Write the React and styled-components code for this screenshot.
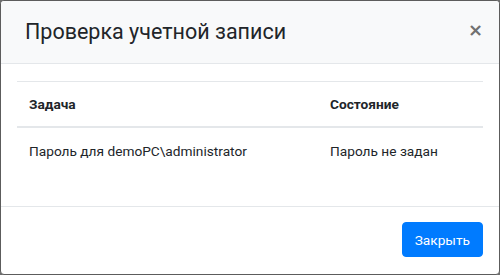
import styled, { createGlobalStyle } from "styled-components";

const Global = createGlobalStyle`
  html, body {
    margin: 0;
    padding: 0;
    background: #6f6f6f;
  }
  body {
    font-family: Roboto, "Noto Sans", sans-serif;
    color: #212529;
  }
`;

export default function App() {
  return (
    <>
      <Global />
      <Dialog>
        <Header>
          <Title>Проверка учетной записи</Title>
          <CloseButton aria-label="Close">×</CloseButton>
        </Header>
        <Body>
          <Table>
            <thead>
              <tr>
                <Th>Задача</Th>
                <Th>Состояние</Th>
              </tr>
            </thead>
            <tbody>
              <tr>
                <Td>Пароль для demoPC\administrator</Td>
                <Td>Пароль не задан</Td>
              </tr>
            </tbody>
          </Table>
        </Body>
        <Footer>
          <PrimaryButton>Закрыть</PrimaryButton>
        </Footer>
      </Dialog>
    </>
  );
}

const Dialog = styled.div`
  box-sizing: border-box;
  width: 500px;
  height: 275px;
  background: #fff;
  border: 1px solid #5c5c5c;
  border-radius: 4px;
  overflow: hidden;
  display: flex;
  flex-direction: column;
`;

const Header = styled.div`
  height: 63px;
  box-sizing: border-box;
  background: #f8f9fa;
  border-bottom: 1px solid #e4e7ea;
  display: flex;
  align-items: center;
  justify-content: space-between;
  padding: 0 16px 0 24px;
`;

const Title = styled.h5`
  margin: 0;
  font-size: 21.5px;
  font-weight: 400;
  line-height: 1.5;
`;

const CloseButton = styled.button`
  border: 0;
  background: transparent;
  padding: 0;
  margin-top: -4px;
  font-family: "DejaVu Sans", sans-serif;
  font-size: 18px;
  font-weight: 700;
  line-height: 1;
  color: #707070;
  cursor: pointer;
`;

const Body = styled.div`
  padding: 16px 16px;
  flex: 1;
`;

const Table = styled.table`
  width: 100%;
  border-collapse: collapse;
  font-size: 13.7px;
  margin-top: 1px;
`;

const Th = styled.th`
  text-align: left;
  font-weight: 700;
  padding: 12px 12px 11px;
  line-height: 21px;
  border-top: 1px solid #e4e7ea;
  border-bottom: 2px solid #e4e7ea;
  &:first-child { width: 277px; }
`;

const Td = styled.td`
  padding: 13px 12px 12px;
  line-height: 21px;
  &:first-child { width: 277px; }
`;

const Footer = styled.div`
  height: 68px;
  box-sizing: border-box;
  border-top: 1px solid #e4e7ea;
  display: flex;
  align-items: center;
  justify-content: flex-end;
  padding: 0 16px 2px;
`;

const PrimaryButton = styled.button`
  height: 35px;
  padding: 0 12px;
  border: 1px solid #007bff;
  background: #007bff;
  color: #fff;
  border-radius: 4px;
  font-family: Roboto, sans-serif;
  font-size: 13.7px;
  cursor: pointer;
`;
